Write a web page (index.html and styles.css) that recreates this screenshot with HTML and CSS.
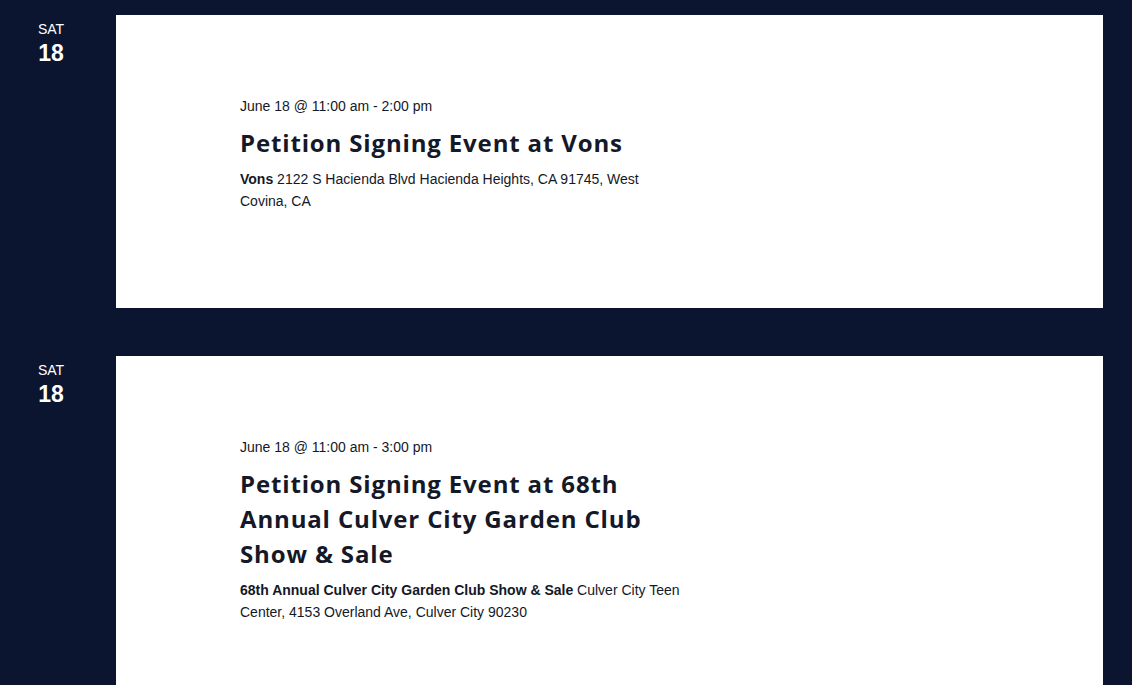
FILE: index.html
```html
<!DOCTYPE html>
<html>
<head>
<meta charset="utf-8">
<link rel="stylesheet" href="styles.css">
</head>
<body>
<main class="list">
  <section class="row">
    <div class="date-tag">
      <span class="dow">SAT</span>
      <span class="dom">18</span>
    </div>
    <article class="card">
      <div class="content">
        <div class="when">June 18 @ 11:00 am - 2:00 pm</div>
        <h3 class="title">Petition Signing Event at Vons</h3>
        <p class="venue"><strong>Vons</strong> 2122 S Hacienda Blvd Hacienda Heights, CA 91745, West Covina, CA</p>
      </div>
    </article>
  </section>
  <section class="row">
    <div class="date-tag">
      <span class="dow">SAT</span>
      <span class="dom">18</span>
    </div>
    <article class="card">
      <div class="content">
        <div class="when">June 18 @ 11:00 am - 3:00 pm</div>
        <h3 class="title">Petition Signing Event at 68th Annual Culver City Garden Club Show &amp; Sale</h3>
        <p class="venue"><strong>68th Annual Culver City Garden Club Show &amp; Sale</strong> Culver City Teen Center, 4153 Overland Ave, Culver City 90230</p>
      </div>
    </article>
  </section>
</main>
</body>
</html>
```
FILE: styles.css
```css
html, body {
  margin: 0;
  padding: 0;
  background: #0b1530;
  height: 100%;
  overflow: hidden;
}
body {
  font-family: "Liberation Sans", Arial, sans-serif;
  color: #141827;
}
.list {
  display: flex;
  flex-direction: column;
  gap: 48px;
  padding: 15px 29px 0 0;
}
.row {
  display: grid;
  grid-template-columns: 116px 1fr;
}
.date-tag {
  display: flex;
  flex-direction: column;
  align-items: center;
  width: 102px;
  color: #ffffff;
  padding-top: 6px;
}
.dow {
  font-size: 14px;
  line-height: 16px;
}
.dom {
  font-size: 23px;
  font-weight: 700;
  line-height: 26px;
  margin-top: 3px;
  font-family: "Liberation Sans", Arial, sans-serif;
}
.card {
  background: #ffffff;
  min-height: 293px;
  box-sizing: border-box;
  padding: 80px 0 80px 124px;
}
.content {
  width: 445px;
}
.when {
  font-size: 14px;
  line-height: 22px;
}
.title {
  font-family: "Open Sans", "DejaVu Sans", sans-serif;
  font-weight: 700;
  font-size: 24px;
  letter-spacing: 0.85px;
  line-height: 35px;
  margin: 8px 0 8px;
  color: #141827;
}
.venue {
  font-size: 14px;
  line-height: 22px;
  margin: 0;
}
.venue strong {
  font-weight: 700;
}
```
